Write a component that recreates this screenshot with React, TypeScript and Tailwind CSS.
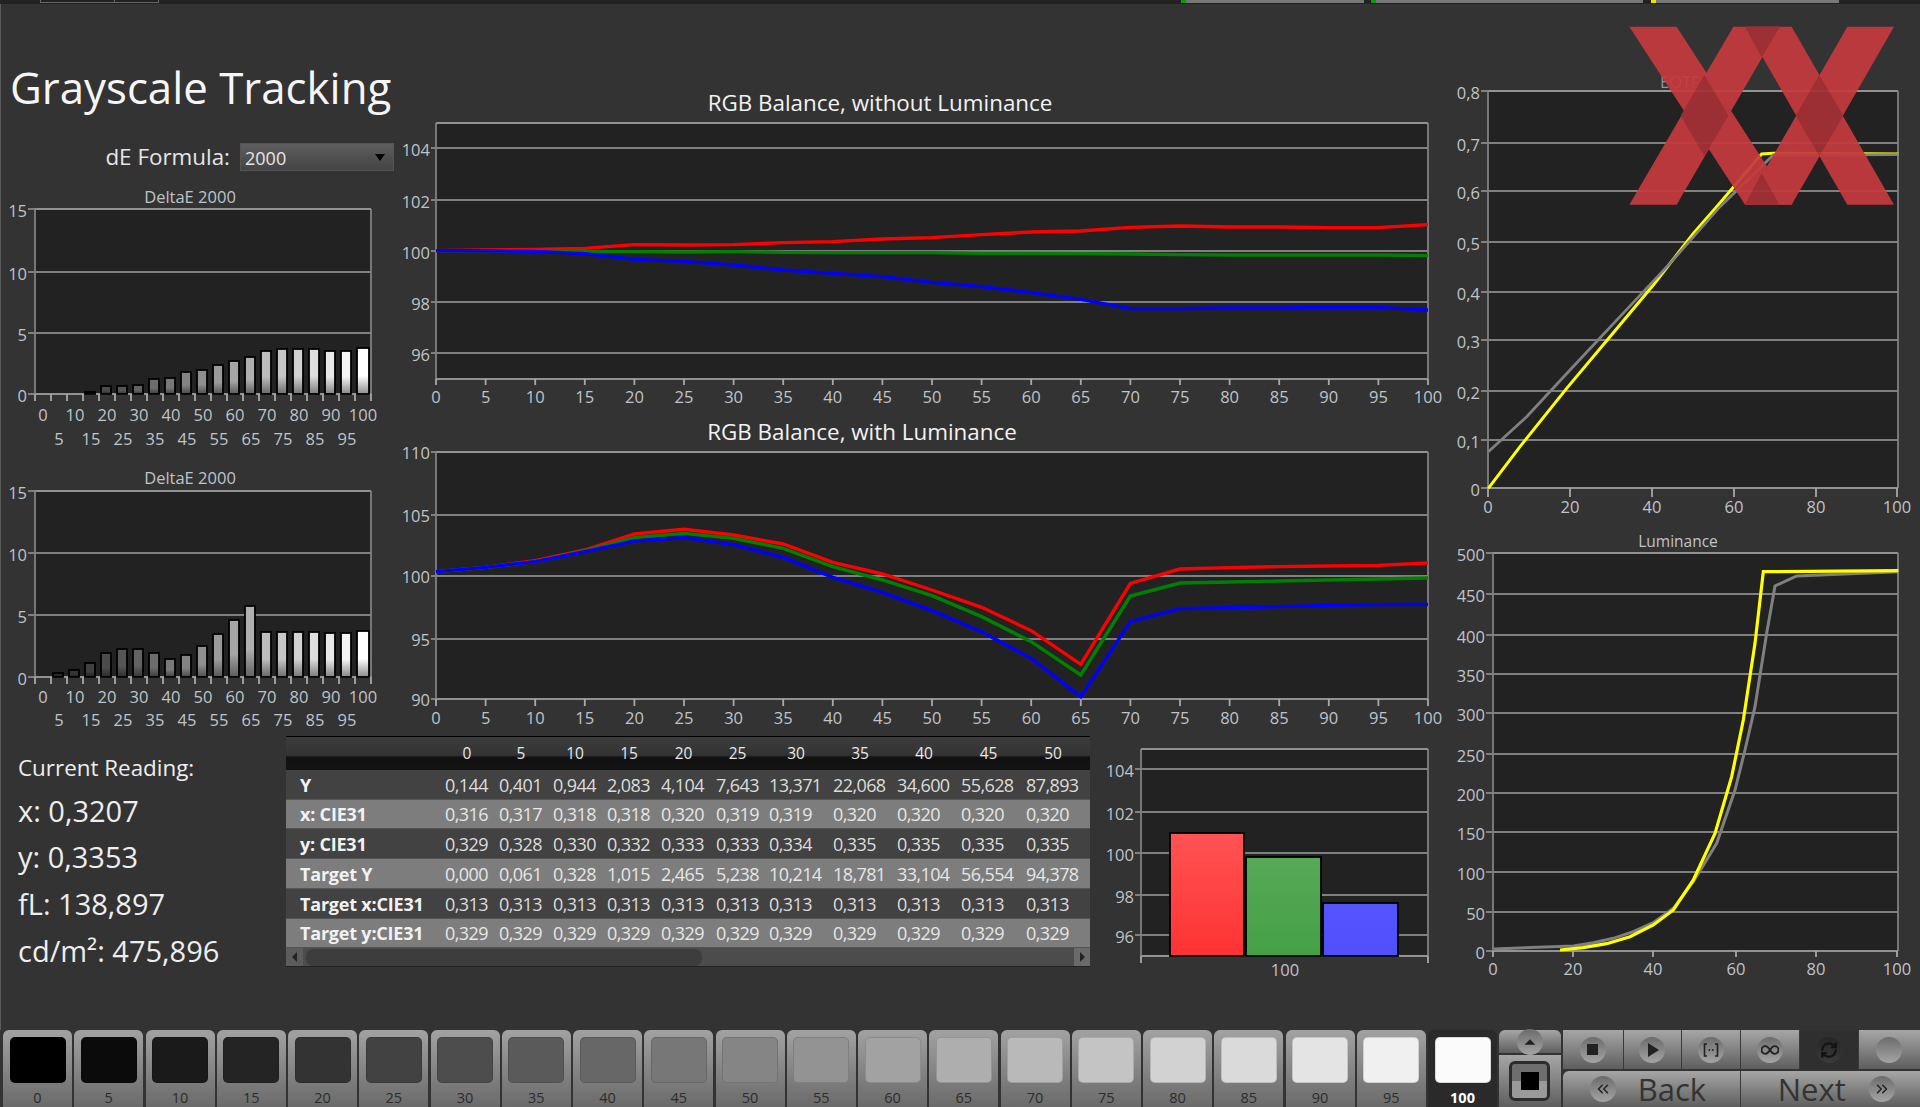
import React from "react";
import { ChevronsLeft, ChevronsRight, RefreshCw } from "lucide-react";

const TXT = "#bfc4c9";
const GRID = "#808080";

function Chart({ x, y, w, h, children }: { x: number; y: number; w: number; h: number; children: React.ReactNode }) {
  return (
    <svg width={w} height={h} viewBox={`${x} ${y} ${w} ${h}`} className="block shrink-0">
      {children}
    </svg>
  );
}

type PlotProps = {
  x0: number; x1: number; y0: number; y1: number;
  ys: [number, string][];
  xs: [number, string][];
  tickLen?: number;
  labelY?: number;
  labelDy?: number;
  yTick?: number;
  fs?: number;
  extraTicks?: number[];
};

function Plot({ x0, x1, y0, y1, ys, xs, tickLen = 7, labelY = 0, labelDy = 1, yTick = 6, fs = 16.5, extraTicks }: PlotProps) {
  return (
    <g>
      <rect x={x0} y={y0} width={x1 - x0} height={y1 - y0} fill="#222222" />
      {ys.map(([yy, t]) => (
        <g key={t}>
          <line x1={x0 - yTick} x2={x1} y1={yy} y2={yy} stroke={GRID} strokeWidth={1.8} />
          <text x={x0 - yTick - 1} y={yy + labelDy} textAnchor="end" dominantBaseline="central" fontSize={fs} fill={TXT}>{t}</text>
        </g>
      ))}
      <line x1={x0} x2={x1} y1={y0} y2={y0} stroke="#929292" strokeWidth={2.2} />
      <line x1={x0} x2={x0} y1={y0} y2={y1} stroke={GRID} strokeWidth={1.8} />
      <line x1={x1} x2={x1} y1={y0} y2={y1} stroke={GRID} strokeWidth={1.8} />
      <line x1={x0} x2={x1} y1={y1} y2={y1} stroke="#929292" strokeWidth={2.2} />
      {(extraTicks ?? xs.map((a) => a[0])).map((xx, i) => (
        <line key={i} x1={xx} x2={xx} y1={y1} y2={y1 + tickLen} stroke="#a8a8a8" strokeWidth={1.8} />
      ))}
      {xs.map(([xx, t]) => (
        <text key={t} x={xx} y={labelY} textAnchor="middle" dominantBaseline="central" fontSize={fs} fill={TXT}>{t}</text>
      ))}
    </g>
  );
}

function pts(a: number[][], ox: number, oy: number) {
  return a.map(([x, y]) => `${ox + x / 3},${oy + y / 3}`).join(" ");
}

function series(v: number[], oy: number) {
  return v.map((y, i) => `${436 + 49.6 * i},${oy + y / 3}`).join(" ");
}

const five = Array.from({ length: 21 }, (_, i) => i * 5);
const rgbX: [number, string][] = five.map((v, i) => [436 + 49.6 * i, String(v)]);

function DeltaChart({ id, sy, sh, y0, y1, ys, bars, row1, row2, titleY }: { id: string; sy: number; sh: number; y0: number; y1: number; ys: [number, string][]; bars: number[]; row1: number; row2: number; titleY: number }) {
  return (
    <Chart x={1} y={sy} w={399} h={sh}>
      <defs>
        {bars.map((_, i) => {
          const top = Math.round(30 + (i / 20) * 225);
          const bot = Math.round(top * 0.55);
          return (
            <linearGradient key={i} id={`${id}${i}`} x1="0" x2="0" y1="0" y2="1">
              <stop offset="0" stopColor={`rgb(${top},${top},${top})`} />
              <stop offset="0.6" stopColor={`rgb(${top},${top},${top})`} />
              <stop offset="1" stopColor={`rgb(${bot},${bot},${bot})`} />
            </linearGradient>
          );
        })}
      </defs>
      <text x={190} y={titleY} textAnchor="middle" dominantBaseline="central" fontSize={16.5} fill={TXT}>DeltaE 2000</text>
      <Plot
        x0={35} x1={371} y0={y0} y1={y1} ys={ys} xs={[]} yTick={7} labelY={0}
        extraTicks={Array.from({ length: 22 }, (_, i) => 35 + 16 * i)}
      />
      {bars.map((b, i) =>
        b > 0 ? (
          <rect key={i} x={42 + 16 * i - 5} y={y1 - b} width={i === 20 ? 12 : 10} height={b} fill={`url(#${id}${i})`} stroke="#000" strokeWidth={1.8} />
        ) : null
      )}
      {five.map((v, i) => (
        <text key={v} x={43 + 16 * i} y={i % 2 === 0 ? row1 : row2} textAnchor="middle" dominantBaseline="central" fontSize={16.5} fill={TXT}>{v}</text>
      ))}
    </Chart>
  );
}

const tableRows: { label: string; light: boolean; vals: string[] }[] = [
  { label: "Y", light: false, vals: ["0,144", "0,401", "0,944", "2,083", "4,104", "7,643", "13,371", "22,068", "34,600", "55,628", "87,893"] },
  { label: "x: CIE31", light: true, vals: ["0,316", "0,317", "0,318", "0,318", "0,320", "0,319", "0,319", "0,320", "0,320", "0,320", "0,320"] },
  { label: "y: CIE31", light: false, vals: ["0,329", "0,328", "0,330", "0,332", "0,333", "0,333", "0,334", "0,335", "0,335", "0,335", "0,335"] },
  { label: "Target Y", light: true, vals: ["0,000", "0,061", "0,328", "1,015", "2,465", "5,238", "10,214", "18,781", "33,104", "56,554", "94,378"] },
  { label: "Target x:CIE31", light: false, vals: ["0,313", "0,313", "0,313", "0,313", "0,313", "0,313", "0,313", "0,313", "0,313", "0,313", "0,313"] },
  { label: "Target y:CIE31", light: true, vals: ["0,329", "0,329", "0,329", "0,329", "0,329", "0,329", "0,329", "0,329", "0,329", "0,329", "0,329"] },
];
const COLS = "grid grid-cols-[159px_54px_54px_54px_54px_55px_53px_64px_64px_64px_65px_64px]";
const rowHeights = ["h-[30px]", "h-[29px]", "h-[30px]", "h-[30px]", "h-[30px]", "h-[29px]"];

function Table() {
  return (
    <div className="w-[804px] h-[231px] shrink-0 flex flex-col border-t border-black">
      <div className={`${COLS} h-[33px] items-center bg-[linear-gradient(#3c3c3c_0%,#333_55%,#111_62%,#131313_100%)] text-[#e8e8e8] text-[15.5px]`}>
        <div />
        {["0", "5", "10", "15", "20", "25", "30", "35", "40", "45", "50"].map((h) => (
          <div key={h} className="pr-[10px] text-center">{h}</div>
        ))}
      </div>
      {tableRows.map((r, idx) => (
        <div key={r.label} className={`${COLS} ${rowHeights[idx]} items-center pt-[1px] text-[18px] ${r.light ? "bg-[#7d7d7d] text-[#e6e6e6]" : "bg-[#424242] text-[#dcdcdc]"} border-b border-[#555]`}>
          <div className="pl-[14px] font-bold text-[#f2f2f2] text-[18px] tracking-[-0.2px] whitespace-nowrap">{r.label}</div>
          {r.vals.map((v, i) => (
            <div key={i} className="whitespace-nowrap tracking-[-0.6px]">{v}</div>
          ))}
        </div>
      ))}
      <div className="flex-1 flex items-center bg-[#4c4c4c] border-b border-[#222]">
        <div className="w-[17px] h-full flex items-center justify-center bg-[#5c5c5c]">
          <div className="w-0 h-0 border-y-[5px] border-y-transparent border-r-[5px] border-r-[#222]" />
        </div>
        <div className="ml-[3px] w-[396px] h-[17px] rounded-[7px] bg-[#3d3d3d]" />
        <div className="flex-1" />
        <div className="w-[16px] h-full flex items-center justify-center bg-[#6a6a6a]">
          <div className="w-0 h-0 border-y-[5px] border-y-transparent border-l-[5px] border-l-[#222]" />
        </div>
      </div>
    </div>
  );
}

const swatches = ["#000000", "#0b0b0b", "#1a1a1a", "#242424", "#333333", "#424242", "#4d4d4d", "#5a5a5a", "#676767", "#777777", "#858585", "#939393", "#a2a2a2", "#aeaeae", "#b9b9b9", "#c4c4c4", "#d2d2d2", "#dadada", "#e4e4e4", "#f0f0f0", "#fbfbfb"];

function Knob({ children, dark }: { children?: React.ReactNode; dark?: boolean }) {
  return (
    <div className={`w-[26px] h-[26px] rounded-full flex items-center justify-center shrink-0 ${dark ? "bg-[linear-gradient(#262626,#3a3a3a)]" : "bg-[linear-gradient(#6c6c6c,#a4a4a4)]"}`}>
      {children}
    </div>
  );
}

const btn = "bg-[linear-gradient(#a6a6a6,#5e5e5e)]";

export default function App() {
  return (
    <div className="w-[1920px] h-[1107px] overflow-hidden flex flex-col bg-[#333333] font-['Open_Sans',sans-serif]">
      {/* top strip */}
      <div className="h-[4px] shrink-0 bg-[#222222] flex items-start">
        <div className="ml-[40px] w-[75px] h-[3px] border-x border-b border-[#666]" />
        <div className="w-[44px] h-[3px] border-r border-b border-[#666]" />
        <div className="ml-[1022px] w-[183px] h-[3px] bg-[#777] flex"><div className="w-[5px] bg-[#0a9a0a]" /></div>
        <div className="ml-[7px] w-[272px] h-[3px] bg-[#777] flex"><div className="w-[5px] bg-[#0a9a0a]" /></div>
        <div className="ml-[8px] w-[188px] h-[3px] bg-[#777] flex"><div className="w-[5px] bg-[#e6e600]" /></div>
      </div>

      <div className="h-[1026px] shrink-0 flex border-l border-[#5c5c5c]">
        {/* left and middle */}
        <div className="w-[1444px] shrink-0 flex flex-col">
          <div className="h-[732px] shrink-0 flex">
            <div className="w-[399px] shrink-0 flex flex-col">
              <h1 className="mt-[53px] pl-[9px] text-[43.8px] leading-[60px] text-[#f6f6f6] whitespace-nowrap">Grayscale Tracking</h1>
              <div className="mt-[26px] h-[28px] flex items-center justify-end gap-[10px] pr-[6px]">
                <span className="text-[22.4px] text-[#e6e6e6] whitespace-nowrap">dE Formula:</span>
                <div className="w-[154px] h-[28px] flex items-center justify-between px-[4px] bg-[linear-gradient(#5e5e5e,#444444)] border border-[#555]">
                  <span className="pt-[2px] text-[18px] text-[#e6e6e6] leading-none">2000</span>
                  <div className="mr-[4px] w-0 h-0 border-x-[5px] border-x-transparent border-t-[7px] border-t-black" />
                </div>
              </div>
              <DeltaChart
                id="a" sy={171} sh={282} y0={209} y1={394}
                ys={[[209, "15"], [272, "10"], [333, "5"], [394, "0"]]}
                bars={[0, 0, 0, 2, 8, 8, 9, 15, 16, 22, 24, 29, 33, 37, 43, 45, 45, 45, 43, 43, 46]}
                row1={414} row2={438} titleY={196}
              />
              <DeltaChart
                id="b" sy={453} sh={283} y0={491} y1={677}
                ys={[[491, "15"], [553, "10"], [615, "5"], [677, "0"]]}
                bars={[0, 4, 7, 14, 24, 28, 28, 24, 18, 22, 31, 43, 57, 71, 45, 45, 45, 45, 44, 44, 46]}
                row1={696} row2={719} titleY={477}
              />
            </div>
            <div className="flex-1 flex flex-col">
              <Chart x={400} y={4} w={1045} h={410}>
                <text x={880} y={102} textAnchor="middle" dominantBaseline="central" fontSize={22.4} fill="#f2f2f2">RGB Balance, without Luminance</text>
                <Plot
                  x0={436} x1={1428} y0={123} y1={379} tickLen={6} labelY={396} labelDy={1} yTick={5}
                  ys={[[148, "104"], [200, "102"], [251, "100"], [302, "98"], [353, "96"]]} xs={rgbX}
                />
                <polyline fill="none" stroke="#ff0000" strokeWidth={3.4} points={series([482, 480, 478, 475, 464, 465, 464, 458, 455, 447, 443, 434, 426, 423, 412, 408, 411, 411, 413, 413, 404], 90)} />
                <polyline fill="none" stroke="#008000" strokeWidth={3.4} points={series([482, 482, 483, 484, 485, 486, 485, 487, 488, 488, 488, 490, 490, 491, 492, 494, 495, 495, 495, 495, 497], 90)} />
                <polyline fill="none" stroke="#0000ff" strokeWidth={3.4} points={series([482, 482, 484, 491, 508, 514, 525, 540, 550, 560, 577, 590, 608, 628, 656, 656, 654, 654, 652, 652, 660], 90)} />
              </Chart>
              <Chart x={400} y={414} w={1045} h={322}>
                <text x={862} y={431} textAnchor="middle" dominantBaseline="central" fontSize={22.4} fill="#f2f2f2">RGB Balance, with Luminance</text>
                <Plot
                  x0={436} x1={1428} y0={452} y1={699} tickLen={7} labelY={717} labelDy={0} yTick={5}
                  ys={[[452, "110"], [515, "105"], [576, "100"], [639, "95"], [699, "90"]]} xs={rgbX}
                />
                <polyline fill="none" stroke="#ff0000" strokeWidth={3.4} points={series([455, 442, 422, 390, 342, 328, 345, 372, 427, 462, 510, 562, 632, 733, 490, 447, 443, 440, 438, 436, 429], 420)} />
                <polyline fill="none" stroke="#008000" strokeWidth={3.4} points={series([455, 442, 425, 393, 353, 340, 355, 385, 440, 480, 527, 590, 665, 765, 528, 489, 486, 483, 480, 477, 474], 420)} />
                <polyline fill="none" stroke="#0000ff" strokeWidth={3.4} points={series([455, 442, 425, 395, 363, 353, 374, 412, 472, 517, 572, 635, 715, 830, 605, 566, 563, 560, 556, 554, 553], 420)} />
              </Chart>
            </div>
          </div>

          <div className="flex-1 flex">
            <div className="w-[285px] shrink-0 pl-[17px] pt-[17px] text-[#eeeeee] whitespace-nowrap">
              <div className="text-[22.4px] leading-[30px]">Current Reading:</div>
              <div className="mt-[5px] text-[29px] leading-[46px]">x: 0,3207</div>
              <div className="text-[29px] leading-[46px]">y: 0,3353</div>
              <div className="mt-[1px] text-[29px] leading-[46px]">fL: 138,897</div>
              <div className="mt-[1px] text-[29px] leading-[46px]">cd/m²: 475,896</div>
            </div>
            <Table />
            <Chart x={1090} y={736} w={355} h={262}>
              <defs>
                <linearGradient id="r" x1="0" x2="0" y1="0" y2="1"><stop offset="0" stopColor="#ff5353" /><stop offset="1" stopColor="#ff3232" /></linearGradient>
                <linearGradient id="g" x1="0" x2="0" y1="0" y2="1"><stop offset="0" stopColor="#57a957" /><stop offset="1" stopColor="#45a045" /></linearGradient>
                <linearGradient id="bl" x1="0" x2="0" y1="0" y2="1"><stop offset="0" stopColor="#5555ff" /><stop offset="1" stopColor="#5050fa" /></linearGradient>
              </defs>
              <Plot
                x0={1141} x1={1428} y0={749} y1={956} labelY={969} labelDy={1}
                ys={[[769, "104"], [812, "102"], [853, "100"], [895, "98"], [935, "96"]]}
                xs={[[1285, "100"]]} extraTicks={[1141, 1428]}
              />
              <rect x={1170} y={833} width={74} height={123} fill="url(#r)" stroke="#000" strokeWidth={1.8} />
              <rect x={1246} y={857} width={75} height={99} fill="url(#g)" stroke="#000" strokeWidth={1.8} />
              <rect x={1323} y={903} width={75} height={53} fill="url(#bl)" stroke="#000" strokeWidth={1.8} />
            </Chart>
          </div>
        </div>

        {/* right */}
        <div className="flex-1 flex flex-col">
          <Chart x={1445} y={4} w={475} h={516}>
            <text x={1660} y={81} dominantBaseline="central" fontSize={16.5} fill="#8d949b">EOTF</text>
            <Plot
              x0={1488} x1={1898} y0={91} y1={488} labelY={506} yTick={7} tickLen={9} labelDy={1}
              ys={[[91, "0,8"], [143, "0,7"], [191, "0,6"], [242, "0,5"], [292, "0,4"], [340, "0,3"], [391, "0,2"], [440, "0,1"], [488, "0"]]}
              xs={[[1488, "0"], [1570, "20"], [1652, "40"], [1734, "60"], [1816, "80"], [1897, "100"]]}
            />
            <polyline fill="none" stroke="#ffff00" strokeWidth={3} points={pts([[205, 1465], [300, 1340], [440, 1165], [570, 1010], [700, 855], [820, 700], [890, 620], [1025, 462], [1060, 460], [1435, 462]], 1420, 0)} />
            <polyline fill="none" stroke="#808080" strokeWidth={2.8} points={pts([[205, 1355], [320, 1250], [450, 1110], [600, 950], [750, 790], [900, 620], [1060, 465], [1435, 464]], 1420, 0)} />
            <g opacity={0.93}>
              {[
                [[628, 80], [770, 80], [1115, 614], [975, 614]],
                [[940, 80], [1080, 80], [770, 614], [628, 614]],
                [[975, 80], [1115, 80], [1422, 614], [1282, 614]],
                [[1282, 80], [1422, 80], [1115, 614], [975, 614]],
              ].map((p, i) => (
                <polygon key={i} points={pts(p, 1420, 0)} fill="#c53a3e" />
              ))}
              {[
                [[853, 225], [925, 347], [853, 468], [782, 347]],
                [[1198, 225], [1270, 347], [1198, 468], [1127, 347]],
                [[975, 80], [1080, 80], [1025, 172]],
                [[1025, 520], [1078, 614], [975, 614]],
              ].map((p, i) => (
                <polygon key={i} points={pts(p, 1420, 0)} fill="#a53035" />
              ))}
            </g>
          </Chart>
          <Chart x={1445} y={520} w={475} h={480}>
            <text x={1678} y={541} textAnchor="middle" dominantBaseline="central" fontSize={15.5} fill={TXT}>Luminance</text>
            <Plot
              x0={1493} x1={1898} y0={553} y1={951} labelY={968} yTick={7} tickLen={6} labelDy={1}
              ys={[[553, "500"], [594, "450"], [635, "400"], [674, "350"], [713, "300"], [754, "250"], [793, "200"], [832, "150"], [872, "100"], [912, "50"], [951, "0"]]}
              xs={[[1493, "0"], [1573, "20"], [1653, "40"], [1736, "60"], [1816, "80"], [1897, "100"]]}
            />
            <polyline fill="none" stroke="#808080" strokeWidth={3} points={pts([[160, 1287], [400, 1278], [460, 1268], [520, 1255], [580, 1235], [640, 1208], [700, 1165], [760, 1085], [830, 970], [885, 810], [915, 690], [945, 560], [980, 340], [1005, 198], [1070, 168], [1375, 155]], 1440, 520)} />
            <polyline fill="none" stroke="#ffff00" strokeWidth={3.2} points={pts([[360, 1290], [430, 1283], [500, 1271], [570, 1250], [640, 1215], [700, 1170], [760, 1080], [825, 940], [875, 770], [910, 600], [945, 370], [970, 155], [1375, 152]], 1440, 520)} />
          </Chart>
        </div>
      </div>

      {/* bottom strip */}
      <div className="flex-1 flex pl-[3px]">
        <div className="flex gap-[2.25px]">
          {swatches.map((c, i) => {
            const sel = i === 20;
            return (
              <div key={i} className={`w-[69px] h-[77px] rounded-t-[6px] flex flex-col items-center pt-[7px] ${sel ? "bg-[#2a2a2a]" : "bg-[linear-gradient(#a2a2a2,#6a6a6a)]"}`}>
                <div className="w-[56px] h-[46px] rounded-[5px] border border-[#00000022]" style={{ backgroundColor: c }} />
                <div className={`mt-[6px] text-[14.5px] leading-[18px] ${sel ? "text-white font-bold" : "text-[#2c2c2c]"}`}>{i * 5}</div>
              </div>
            );
          })}
        </div>
        <div className="ml-[1.75px] w-[62px] shrink-0 flex flex-col gap-[2px]">
          <div className={`h-[23px] rounded-t-[6px] flex items-center justify-center ${btn}`}>
            <Knob><div className="w-0 h-0 border-x-[6px] border-x-transparent border-b-[6px] border-b-[#222] scale-90" /></Knob>
          </div>
          <div className={`flex-1 flex items-center justify-center ${btn}`}>
            <div className="w-[41px] h-[40px] rounded-[6px] border-[3px] border-[#2c2c2c] flex items-center justify-center bg-[linear-gradient(#6e6e6e_50%,#9a9a9a_50%)]">
              <div className="w-[18px] h-[18px] bg-black" />
            </div>
          </div>
        </div>
        <div className="ml-[2px] flex-1 flex flex-col gap-[2px]">
          <div className="h-[39px] flex">
            <div className={`w-[61px] flex items-center justify-center border-r border-[#3a3a3a] ${btn}`}>
              <Knob><div className="w-[11px] h-[11px] bg-[#222]" /></Knob>
            </div>
            <div className={`w-[58px] flex items-center justify-center border-r border-[#3a3a3a] ${btn}`}>
              <Knob><div className="ml-[2px] w-0 h-0 border-y-[7px] border-y-transparent border-l-[11px] border-l-[#222]" /></Knob>
            </div>
            <div className={`w-[59px] flex items-center justify-center border-r border-[#3a3a3a] ${btn}`}>
              <Knob>
                <svg width="16" height="14" viewBox="0 0 16 14" fill="none" stroke="#222" strokeWidth="1.6">
                  <path d="M4 1H1.5V13H4M12 1H14.5V13H12" />
                  <circle cx="6.3" cy="7" r="0.9" fill="#222" stroke="none" />
                  <circle cx="9.7" cy="7" r="0.9" fill="#222" stroke="none" />
                </svg>
              </Knob>
            </div>
            <div className={`w-[59px] flex items-center justify-center border-r border-[#3a3a3a] ${btn}`}>
              <Knob>
                <svg width="18" height="10" viewBox="0 0 18 10" fill="none" stroke="#222" strokeWidth="1.8">
                  <path d="M9 5C7.5 2.5 6 1.2 4.3 1.2A3.8 3.8 0 0 0 4.3 8.8C6 8.8 7.5 7.5 9 5C10.5 2.5 12 1.2 13.7 1.2A3.8 3.8 0 0 1 13.7 8.8C12 8.8 10.5 7.5 9 5Z" />
                </svg>
              </Knob>
            </div>
            <div className="w-[59px] flex items-center justify-center border-r border-[#3a3a3a] bg-[#2f2f2f]">
              <Knob dark><RefreshCw size={18} strokeWidth={3} color="#141414" /></Knob>
            </div>
            <div className={`flex-1 flex items-center justify-center ${btn}`}>
              <Knob />
            </div>
          </div>
          <div className="flex-1 flex">
            <div className={`w-[178px] rounded-tl-[6px] flex items-center pl-[27px] gap-[22px] border-r border-[#3a3a3a] ${btn}`}>
              <Knob><ChevronsLeft size={18} strokeWidth={2} color="#222" /></Knob>
              <span className="text-[31px] leading-none text-[#333333]">Back</span>
            </div>
            <div className={`flex-1 flex items-center pl-[37px] gap-[23px] ${btn}`}>
              <span className="text-[31px] leading-none text-[#333333]">Next</span>
              <Knob><ChevronsRight size={18} strokeWidth={2} color="#222" /></Knob>
            </div>
          </div>
        </div>
      </div>
    </div>
  );
}
